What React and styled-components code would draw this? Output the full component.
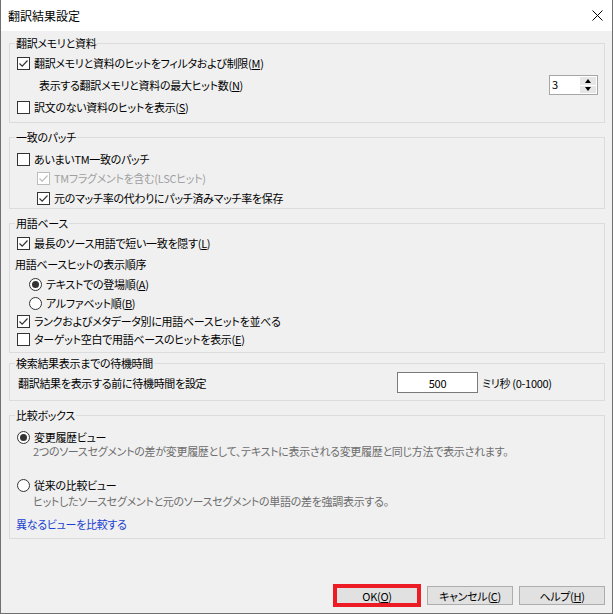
import React from "react";
import styled, {createGlobalStyle} from "styled-components";

const GlobalStyle = createGlobalStyle`
  html, body {
    margin: 0;
    padding: 0;
    background: #f0f0f0;
  }
  body {
    font-family: "Noto Sans CJK JP", "Noto Sans", sans-serif;
    font-size: 11px;
    letter-spacing: -0.3px;
    color: #000;
  }
`;

const Window = styled.div`
  width: 613px;
  height: 614px;
  box-sizing: border-box;
  border: 1px solid #707070;
  border-top: none;
  background: #f0f0f0;
  display: flex;
  flex-direction: column;
  font-feature-settings: "palt";
`;

const TitleBar = styled.div`
  height: 31px;
  flex: 0 0 31px;
  background: #fff;
  display: flex;
  align-items: center;
  justify-content: space-between;
  padding: 0 9px 0 7px;
`;

const Title = styled.span`
  font-size: 12px;
  letter-spacing: 0;
  line-height: 16px;
`;

const Content = styled.div`
  flex: 1;
  display: flex;
  flex-direction: column;
  padding: 4px 7px 6px 8px;
`;

const Group = styled.fieldset`
  margin: ${p => p.$mt || 0}px 0 0;
  padding: 0 6px ${p => p.$pb || 0}px 7px;
  border: 1px solid #dcdcdc;
  min-width: 0;
`;

const Legend = styled.legend`
  padding: 0 1px;
  margin-left: -2px;
  line-height: 16px;
`;

const Row = styled.div`
  display: flex;
  align-items: center;
  height: ${p => p.$h || 18}px;
  margin-top: ${p => p.$mt || 0}px;
  padding-left: ${p => p.$indent || 0}px;
  color: ${p => (p.$disabled ? "#a0a0a0" : "#000")};
  white-space: nowrap;
`;

const Label = styled.span`
  line-height: 14px;
  margin-left: ${p => p.$ml || 0}px;
`;

const FixedLabel = styled.span`
  flex: 0 0 ${p => p.$w}px;
  line-height: 14px;
`;

const Desc = styled.span`
  color: #6d6d6d;
  line-height: 14px;
`;

const Link = styled.a`
  color: #1a3fd0;
  text-decoration: none;
  line-height: 14px;
  margin-left: -1px;
  cursor: pointer;
`;

const U = styled.span`
  text-decoration: underline;
  text-underline-offset: 1px;
`;

const Box = styled.span`
  width: 13px;
  height: 13px;
  flex: 0 0 13px;
  box-sizing: border-box;
  border: 1px solid ${p => (p.$disabled ? "#bcbcbc" : "#333")};
  background: #fff;
  margin-right: 4px;
  display: flex;
  align-items: center;
  justify-content: center;
`;

const Radio = styled.span`
  width: 13px;
  height: 13px;
  flex: 0 0 13px;
  box-sizing: border-box;
  border: 1px solid #333;
  border-radius: 50%;
  background: #fff;
  margin-right: 4px;
  display: flex;
  align-items: center;
  justify-content: center;
  &::after {
    content: "";
    width: 7px;
    height: 7px;
    border-radius: 50%;
    background: #333;
    display: ${p => (p.$on ? "block" : "none")};
  }
`;

const Spacer = styled.div`
  flex: 1;
`;

const Spin = styled.div`
  width: 49px;
  height: 20px;
  box-sizing: border-box;
  border: 1px solid #a6a6a6;
  background: #fff;
  display: flex;
  align-items: stretch;
`;

const SpinValue = styled.span`
  flex: 1;
  padding-left: 2px;
  line-height: 17px;
`;

const SpinButtons = styled.div`
  width: 16px;
  margin: 1px;
  display: flex;
  flex-direction: column;
  gap: 1px;
`;

const SpinButton = styled.div`
  flex: 1;
  background: #e6e6e6;
  display: flex;
  align-items: center;
  justify-content: center;
  &::after {
    content: "";
    border-left: 3.5px solid transparent;
    border-right: 3.5px solid transparent;
    ${p => (p.$up ? "border-bottom: 4px solid #000;" : "border-top: 4px solid #000;")}
  }
`;

const TextInput = styled.div`
  width: 81px;
  height: 21px;
  box-sizing: border-box;
  border: 1px solid #7a7a7a;
  background: #fff;
  display: flex;
  align-items: center;
  justify-content: center;
  margin-right: 4px;
`;

const ButtonBar = styled.div`
  margin-top: auto;
  display: flex;
  justify-content: flex-end;
  align-items: center;
  gap: 6px;
`;

const Button = styled.div`
  width: ${p => (p.$highlight ? 88 : 86)}px;
  height: ${p => (p.$highlight ? 23 : 19)}px;
  box-sizing: border-box;
  border: ${p => (p.$highlight ? "4px solid #ed1c24" : "1px solid #adadad")};
  background: #e1e1e1;
  display: flex;
  align-items: center;
  justify-content: center;
  line-height: 14px;
`;

const Check = ({checked, disabled}) => (
    <Box $disabled={disabled}>
        {checked && (
            <svg width="11" height="11" viewBox="0 0 11 11">
                <path d="M1.5 5.5 L4.2 8.2 L9.5 2.5" fill="none"
                      stroke={disabled ? "#bcbcbc" : "#333"} strokeWidth="1.2"/>
            </svg>
        )}
    </Box>
);

const App = () => {
    return (
        <>
            <GlobalStyle/>
            <Window>
                <TitleBar>
                    <Title>翻訳結果設定</Title>
                    <svg width="11" height="11" viewBox="0 0 11 11">
                        <path d="M0.5 0.5 L10.5 10.5 M10.5 0.5 L0.5 10.5" stroke="#000" strokeWidth="1"/>
                    </svg>
                </TitleBar>
                <Content>
                    <Group $pb={6}>
                        <Legend>翻訳メモリと資料</Legend>
                        <Row $mt={3}>
                            <Check checked/>
                            <Label>翻訳メモリと資料のヒットをフィルタおよび制限(<U>M</U>)</Label>
                        </Row>
                        <Row $mt={3} $h={20} $indent={22}>
                            <Label>表示する翻訳メモリと資料の最大ヒット数(<U>N</U>)</Label>
                            <Spacer/>
                            <Spin>
                                <SpinValue>3</SpinValue>
                                <SpinButtons>
                                    <SpinButton $up/>
                                    <SpinButton/>
                                </SpinButtons>
                            </Spin>
                        </Row>
                        <Row $mt={3}>
                            <Check/>
                            <Label>訳文のない資料のヒットを表示(<U>S</U>)</Label>
                        </Row>
                    </Group>

                    <Group $mt={6} $pb={1}>
                        <Legend>一致のパッチ</Legend>
                        <Row $mt={5}>
                            <Check/>
                            <Label>あいまいTM一致のパッチ</Label>
                        </Row>
                        <Row $mt={1} $indent={20} $disabled>
                            <Check checked disabled/>
                            <Label>TMフラグメントを含む(LSCヒット)</Label>
                        </Row>
                        <Row $mt={2} $indent={20}>
                            <Check checked/>
                            <Label>元のマッチ率の代わりにパッチ済みマッチ率を保存</Label>
                        </Row>
                    </Group>

                    <Group $mt={6} $pb={4}>
                        <Legend>用語ベース</Legend>
                        <Row $mt={3}>
                            <Check checked/>
                            <Label>最長のソース用語で短い一致を隠す(<U>L</U>)</Label>
                        </Row>
                        <Row $mt={3}>
                            <Label $ml={-2}>用語ベースヒットの表示順序</Label>
                        </Row>
                        <Row $mt={2} $indent={12}>
                            <Radio $on/>
                            <Label>テキストでの登場順(<U>A</U>)</Label>
                        </Row>
                        <Row $mt={1} $indent={12}>
                            <Radio/>
                            <Label>アルファベット順(<U>B</U>)</Label>
                        </Row>
                        <Row>
                            <Check checked/>
                            <Label>ランクおよびメタデータ別に用語ベースヒットを並べる</Label>
                        </Row>
                        <Row>
                            <Check/>
                            <Label>ターゲット空白で用語ベースのヒットを表示(<U>E</U>)</Label>
                        </Row>
                    </Group>

                    <Group $mt={2} $pb={7}>
                        <Legend>検索結果表示までの待機時間</Legend>
                        <Row $mt={1} $h={21} $indent={1}>
                            <FixedLabel $w={379}>翻訳結果を表示する前に待機時間を設定</FixedLabel>
                            <TextInput>500</TextInput>
                            <Label>ミリ秒 (0-1000)</Label>
                        </Row>
                    </Group>

                    <Group $mt={6} $pb={7}>
                        <Legend>比較ボックス</Legend>
                        <Row $mt={7} $h={14} $indent={-1}>
                            <Radio $on/>
                            <Label>変更履歴ビュー</Label>
                        </Row>
                        <Row $h={14} $indent={16}>
                            <Desc>2つのソースセグメントの差が変更履歴として、テキストに表示される変更履歴と同じ方法で表示されます。</Desc>
                        </Row>
                        <Row $mt={20} $h={14} $indent={-1}>
                            <Radio/>
                            <Label>従来の比較ビュー</Label>
                        </Row>
                        <Row $mt={2} $h={14} $indent={16}>
                            <Desc>ヒットしたソースセグメントと元のソースセグメントの単語の差を強調表示する。</Desc>
                        </Row>
                        <Row $mt={9} $h={14}>
                            <Link>異なるビューを比較する</Link>
                        </Row>
                    </Group>

                    <ButtonBar>
                        <Button $highlight>OK(<U>O</U>)</Button>
                        <Button>キャンセル(<U>C</U>)</Button>
                        <Button>ヘルプ(<U>H</U>)</Button>
                    </ButtonBar>
                </Content>
            </Window>
        </>
    );
};

export default App;
